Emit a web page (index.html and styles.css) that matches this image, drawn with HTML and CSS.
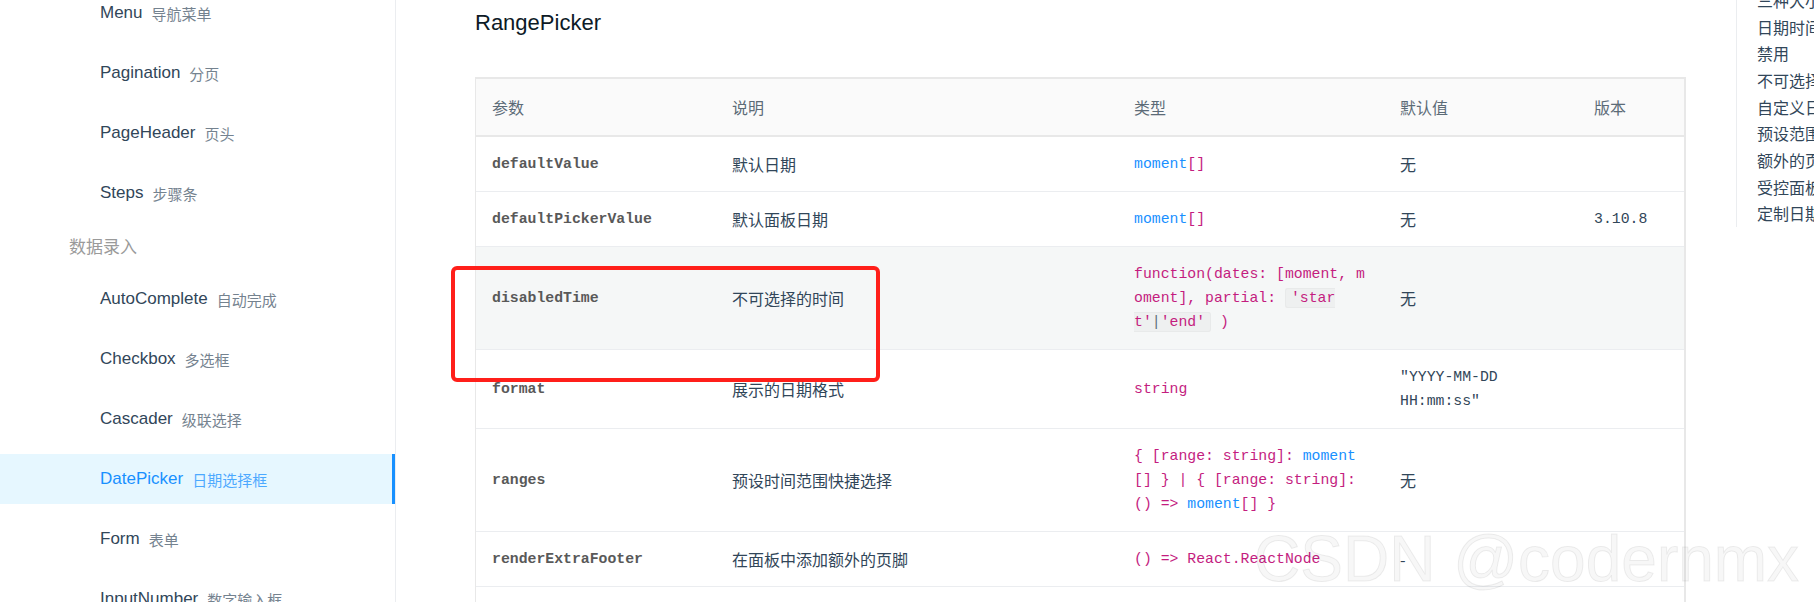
FILE: index.html
```html
<!DOCTYPE html>
<html lang="zh-CN">
<head>
<meta charset="utf-8">
<title>DatePicker 日期选择框</title>
<link rel="stylesheet" href="styles.css">
</head>
<body>
<div class="page">
  <aside class="sidebar">
    <ul class="menu">
      <li class="item"><span class="en">Menu</span><span class="cn">导航菜单</span></li>
      <li class="item"><span class="en">Pagination</span><span class="cn">分页</span></li>
      <li class="item"><span class="en">PageHeader</span><span class="cn">页头</span></li>
      <li class="item"><span class="en">Steps</span><span class="cn">步骤条</span></li>
      <li class="group">数据录入</li>
      <li class="item"><span class="en">AutoComplete</span><span class="cn">自动完成</span></li>
      <li class="item"><span class="en">Checkbox</span><span class="cn">多选框</span></li>
      <li class="item"><span class="en">Cascader</span><span class="cn">级联选择</span></li>
      <li class="item active"><span class="en">DatePicker</span><span class="cn">日期选择框</span></li>
      <li class="item"><span class="en">Form</span><span class="cn">表单</span></li>
      <li class="item"><span class="en">InputNumber</span><span class="cn">数字输入框</span></li>
    </ul>
  </aside>

  <main class="main">
    <h3 class="title">RangePicker</h3>
    <table class="api">
      <colgroup>
        <col class="c1"><col class="c2"><col class="c3"><col class="c4"><col class="c5">
      </colgroup>
      <thead>
        <tr><th>参数</th><th>说明</th><th>类型</th><th>默认值</th><th>版本</th></tr>
      </thead>
      <tbody>
        <tr>
          <td class="param">defaultValue</td>
          <td>默认日期</td>
          <td class="type"><span class="blue">moment</span>[]</td>
          <td>无</td>
          <td></td>
        </tr>
        <tr>
          <td class="param">defaultPickerValue</td>
          <td>默认面板日期</td>
          <td class="type"><span class="blue">moment</span>[]</td>
          <td>无</td>
          <td class="mono">3.10.8</td>
        </tr>
        <tr class="hover">
          <td class="param">disabledTime</td>
          <td>不可选择的时间</td>
          <td class="type">function(dates: [moment, moment], partial: <code class="box">'start'<span class="bar">|</span>'end'</code> )</td>
          <td>无</td>
          <td></td>
        </tr>
        <tr>
          <td class="param">format</td>
          <td>展示的日期格式</td>
          <td class="type">string</td>
          <td class="mono">"YYYY-MM-DD HH:mm:ss"</td>
          <td></td>
        </tr>
        <tr>
          <td class="param">ranges</td>
          <td>预设时间范围快捷选择</td>
          <td class="type">{ [range: string]: <span class="blue">moment</span><wbr>[] } | { [range: string]: () =&gt; <span class="blue">moment</span>[] }</td>
          <td>无</td>
          <td></td>
        </tr>
        <tr>
          <td class="param">renderExtraFooter</td>
          <td>在面板中添加额外的页脚</td>
          <td class="type">() =&gt; React.ReactNode</td>
          <td>-</td>
          <td></td>
        </tr>
        <tr>
          <td class="param">showTime</td>
          <td>增加时间选择功能</td>
          <td class="type">Object|boolean</td>
          <td>false</td>
          <td></td>
        </tr>
      </tbody>
    </table>
  </main>

  <nav class="toc">
    <ul>
      <li>三种大小</li>
      <li>日期时间选择</li>
      <li>禁用</li>
      <li>不可选择日期和时间</li>
      <li>自定义日期范围选择</li>
      <li>预设范围</li>
      <li>额外的页脚</li>
      <li>受控面板</li>
      <li>定制日期单元格</li>
    </ul>
  </nav>
</div>

<div class="annotation"></div>
<div class="watermark">CSDN @codernmx</div>
</body>
</html>
```

FILE: styles.css
```css
* { box-sizing: border-box; }

html, body {
  margin: 0;
  padding: 0;
}

body {
  width: 1814px;
  height: 602px;
  overflow: hidden;
  position: relative;
  background: #fff;
  font-family: "Liberation Sans", "Noto Sans CJK SC", sans-serif;
  color: #314659;
}

ul { list-style: none; margin: 0; padding: 0; }

.page {
  display: flex;
  height: 602px;
  overflow: hidden;
}

/* ---------- left sidebar ---------- */
.sidebar {
  flex: none;
  width: 396px;
  border-right: 1px solid #ebedf0;
  overflow: hidden;
}

.menu {
  display: flex;
  flex-direction: column;
  margin-top: -12px;
}

.item {
  height: 50px;
  margin-bottom: 10px;
  padding-left: 100px;
  display: flex;
  align-items: center;
  gap: 9px;
  font-size: 17px;
  color: #314659;
}

.item .cn {
  font-family: "Noto Sans CJK SC", sans-serif;
  font-size: 15px;
  opacity: 0.67;
}

.item.active {
  background: #e6f7ff;
  color: #1890ff;
  box-shadow: inset -3px 0 0 #1890ff;
}

.item.active .cn { opacity: 0.75; }

.group {
  height: 36px;
  line-height: 36px;
  margin-bottom: 10px;
  padding-left: 69px;
  font-family: "Noto Sans CJK SC", sans-serif;
  font-size: 17px;
  color: #9a9a9a;
}

/* ---------- main ---------- */
.main {
  flex: 1;
  min-width: 0;
  padding: 0 50px 0 79px;
}

.title {
  margin: 8px 0 0;
  font-size: 22px;
  line-height: 30px;
  font-weight: 500;
  color: #0d1a26;
}

.api {
  margin-top: 39px;
  width: 1211px;
  table-layout: fixed;
  border-collapse: separate;
  border-spacing: 0;
  border-top: 2px solid #e8e8e8;
  border-left: 1px solid #e8e8e8;
  border-right: 2px solid #e8e8e8;
  font-size: 16px;
}

.c1 { width: 240px; }
.c2 { width: 402px; }
.c3 { width: 266px; }
.c4 { width: 194px; }
.c5 { width: 106px; }

.api th {
  background: #fafafa;
  padding: 16px 16px;
  line-height: 24px;
  text-align: left;
  font-weight: normal;
  color: #5c6b77;
  font-family: "Noto Sans CJK SC", sans-serif;
  border-bottom: 2px solid #e8e8e8;
}

.api td {
  padding: 15px 16px;
  line-height: 24px;
  vertical-align: middle;
  border-bottom: 1px solid #ebedf0;
  font-family: "Noto Sans CJK SC", sans-serif;
  color: #314659;
}

.api tr.hover td { background: #f5f7f7; }

.api td.param {
  font-family: "Liberation Mono", monospace;
  font-size: 14.8px;
  font-weight: bold;
  color: #595959;
}

.api td.type {
  font-family: "Liberation Mono", monospace;
  font-size: 14.8px;
  color: #c41d7f;
  word-break: break-all;
}

.api td.mono {
  font-family: "Liberation Mono", monospace;
  font-size: 14.8px;
  color: #314659;
}

.blue { color: #1890ff; }

.box {
  font-family: "Liberation Mono", monospace;
  font-size: 14.8px;
  padding: 1px 5px;
  background: #eef0f0;
  border: 1px solid #e8eaea;
  border-radius: 3px;
  color: #c41d7f;
}

.box .bar { color: #5c6b77; }

/* ---------- right toc ---------- */
.toc {
  flex: none;
  width: 78px;
  align-self: flex-start;
  margin-top: -13px;
  padding-left: 20px;
  border-left: 1px solid #ebedf0;
  overflow: hidden;
}

.toc li {
  height: 26.67px;
  line-height: 26.67px;
  white-space: nowrap;
  font-family: "Noto Sans CJK SC", sans-serif;
  font-size: 16px;
  color: #314659;
}

/* ---------- overlays ---------- */
.annotation {
  position: absolute;
  left: 451px;
  top: 266px;
  width: 429px;
  height: 116px;
  border: 4px solid #ff1f1a;
  border-radius: 6px;
  pointer-events: none;
}

.watermark {
  position: absolute;
  left: 1254px;
  top: 527px;
  font-family: "Liberation Sans", sans-serif;
  font-size: 64px;
  line-height: 64px;
  white-space: nowrap;
  color: rgba(0, 0, 0, 0.03);
  -webkit-text-stroke: 1px rgba(0, 0, 0, 0.07);
  pointer-events: none;
}
```
